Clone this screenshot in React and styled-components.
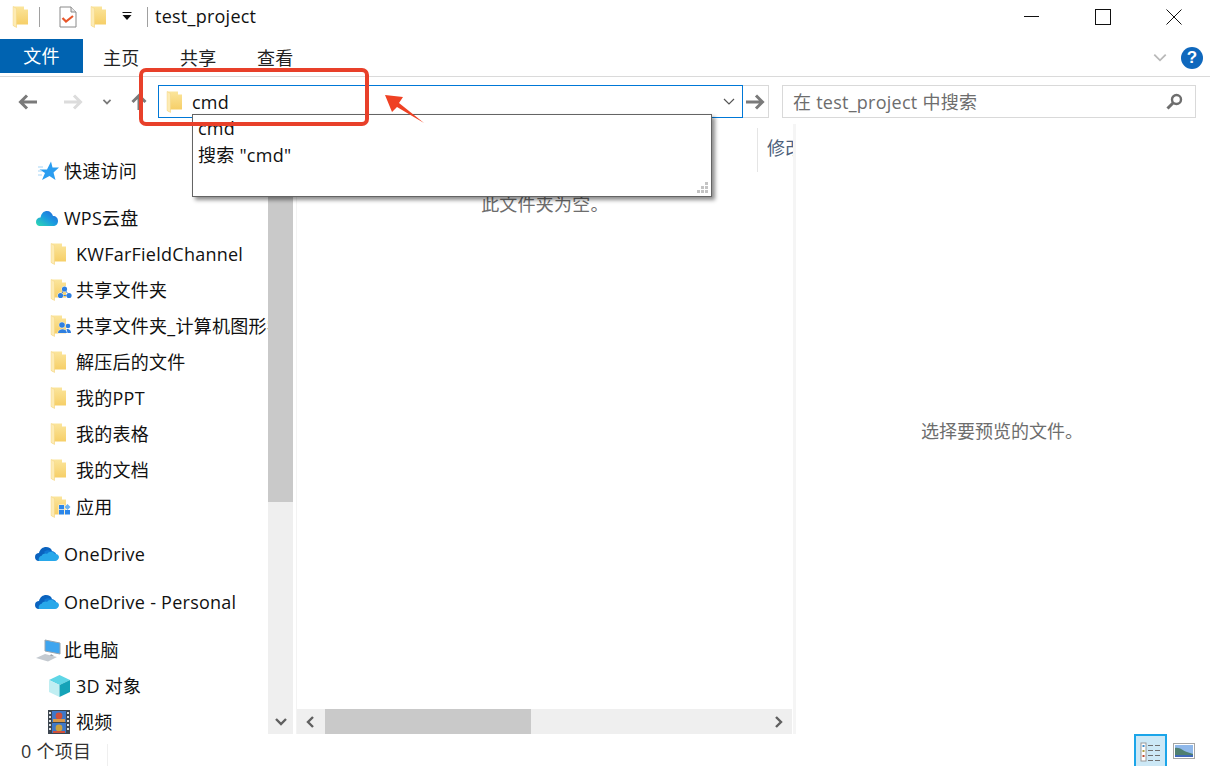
import React from "react";
import styled, { createGlobalStyle } from "styled-components";

const FONT = `"Open Sans", "Noto Sans CJK SC", sans-serif`;

const Global = createGlobalStyle`
  html, body { margin: 0; padding: 0; background: #fff; }
  * { box-sizing: border-box; }
`;

const Window = styled.div`
  position: relative;
  width: 1210px;
  height: 766px;
  overflow: hidden;
  display: flex;
  flex-direction: column;
  background: #fff;
  color: #111;
  font: 18px/24px ${FONT};
  letter-spacing: 0.25px;
`;

/* title bar */
const TitleBar = styled.div`
  height: 39px;
  padding: 0 1px 6px 10px;
  display: flex;
  align-items: center;
`;

const TitleDivider = styled.div`
  width: 1px;
  height: 20px;
  background: #a0a0a0;
  margin: 0 ${(p) => p.$right}px 0 ${(p) => p.$left}px;
`;

const TitleIcon = styled.div`
  display: flex;
  margin-left: ${(p) => p.$ml || 0}px;
`;

const Title = styled.div`
  flex: 1;
  margin-top: -2px;
`;

const WindowButton = styled.div`
  width: 71px;
  height: 33px;
  display: flex;
  align-items: center;
  justify-content: center;
`;

/* ribbon */
const Ribbon = styled.div`
  height: 38px;
  padding-bottom: 3px;
  display: flex;
  align-items: stretch;
  border-bottom: 1px solid #dadada;
`;

const FileTab = styled.div`
  width: 83px;
  background: #0063b1;
  color: #fff;
  display: flex;
  align-items: center;
  justify-content: center;
  margin-right: 20px;
`;

const Tab = styled.div`
  width: 37px;
  margin-right: 40px;
  display: flex;
  align-items: center;
  white-space: nowrap;
  padding-top: 3px;
  color: #222;
`;

const RibbonRight = styled.div`
  margin-left: auto;
  padding-right: 7px;
  display: flex;
  align-items: center;
  gap: 13px;
  padding-top: 3px;
`;

const Help = styled.div`
  width: 22px;
  height: 22px;
  border-radius: 50%;
  background: #0f68bd;
  color: #fff;
  font: bold 17px/22px "Liberation Sans", sans-serif;
  text-align: center;
`;

/* navigation */
const NavBar = styled.div`
  height: 47px;
  padding: 8px 14px 6px 18px;
  display: flex;
  align-items: stretch;
`;

const NavIcon = styled.div`
  display: flex;
  align-items: center;
  justify-content: center;
  width: ${(p) => p.$w}px;
  margin-right: ${(p) => p.$mr || 0}px;
`;

const AddressBox = styled.div`
  width: 585px;
  display: flex;
  align-items: center;
  padding: 0 6px 0 5px;
  border: 1px solid #0078d7;
`;

const AddressText = styled.div`
  flex: 1;
`;

const GoButton = styled.div`
  width: 26px;
  display: flex;
  align-items: center;
  justify-content: center;
  border: 1px solid #d9d9d9;
  border-left: 0;
  margin-right: 13px;
`;

const SearchBox = styled.div`
  flex: 1;
  display: flex;
  align-items: center;
  justify-content: space-between;
  padding: 0 12px 0 10px;
  border: 1px solid #d9d9d9;
  color: #6d6d6d;
`;

/* main area */
const Main = styled.div`
  height: 610px;
  display: flex;
`;

const Sidebar = styled.div`
  width: 268px;
  padding-top: 29px;
  overflow: hidden;
`;

const Row = styled.div`
  height: 36px;
  display: flex;
  align-items: center;
  white-space: nowrap;
  padding-left: ${(p) => (p.$child ? 48 : 35)}px;
  margin-bottom: ${(p) => p.$gap || 0}px;
`;

const RowIcon = styled.div`
  width: 28px;
  flex: none;
  display: flex;
  align-items: center;
  margin-right: ${(p) => (p.$child ? 0 : 1)}px;
`;

const VScroll = styled.div`
  width: 25px;
  background: #efefef;
  display: flex;
  flex-direction: column;
`;

const VThumb = styled.div`
  height: 378px;
  background: #c9c9c9;
`;

const ScrollArrow = styled.div`
  height: 25px;
  width: ${(p) => p.$w || 25}px;
  flex: none;
  display: flex;
  align-items: center;
  justify-content: center;
  margin-top: ${(p) => (p.$end ? "auto" : 0)};
  margin-left: ${(p) => (p.$end ? "auto" : 0)};
`;

const FilePane = styled.div`
  width: 497px;
  margin-left: 3px;
  border-left: 1px solid #f3f3f3;
  display: flex;
  flex-direction: column;
`;

const ColumnHeader = styled.div`
  height: 44px;
  margin-top: 4px;
  display: flex;
  justify-content: flex-end;
`;

const ColumnTitle = styled.div`
  width: 36px;
  overflow: hidden;
  white-space: nowrap;
  padding: 8px 0 0 9px;
  border-left: 1px solid #e5e5e5;
  color: #4c607a;
`;

const EmptyText = styled.div`
  flex: 1;
  padding: 20px 0 0 0;
  text-align: center;
  color: #6d6d6d;
`;

const HScroll = styled.div`
  height: 25px;
  margin-right: 1px;
  display: flex;
  background: #efefef;
`;

const HThumb = styled.div`
  width: 206px;
  background: #c9c9c9;
`;

const Preview = styled.div`
  flex: 1;
  border-left: 3px solid #f5f5f5;
  padding: 4px 2px 0 0;
  display: flex;
  align-items: center;
  justify-content: center;
  color: #6d6d6d;
  letter-spacing: 0;
`;

/* status bar */
const StatusBar = styled.div`
  flex: 1;
  display: flex;
  align-items: center;
  padding: 2px 0 0 21px;
  color: #333;
`;

const StatusDivider = styled.div`
  width: 1px;
  height: 22px;
  margin: 7px 0 0 16px;
  background: #efefef;
`;

const ViewDetails = styled.div`
  margin: -2px 0 0 auto;
  align-self: stretch;
  width: 33px;
  background: #cce8f6;
  border: 2px solid #1ba5e9;
  border-bottom: 0;
  display: flex;
  align-items: center;
  justify-content: center;
`;

const ViewLarge = styled.div`
  margin: 0 15px 0 6px;
  display: flex;
`;

/* overlays */
const Suggest = styled.div`
  position: absolute;
  left: 192px;
  top: 114px;
  width: 520px;
  height: 83px;
  padding: 0 5px;
  background: #fff;
  border: 1px solid #646464;
  box-shadow: 3px 3px 4px rgba(0, 0, 0, 0.45);
  line-height: 27px;
`;

const Grip = styled.svg`
  position: absolute;
  right: 2px;
  bottom: 2px;
`;

const Callout = styled.div`
  position: absolute;
  left: 139px;
  top: 68px;
  width: 230px;
  height: 58px;
  border: 4px solid #e8402a;
  border-radius: 7px;
`;

const CalloutArrow = styled.svg`
  position: absolute;
  left: 380px;
  top: 90px;
`;

const Folder = ({ badge }) => (
  <svg width="28" height="22" viewBox="0 0 28 22">
    <defs>
      <linearGradient id="folderFill" x1="0" y1="0" x2="0" y2="1">
        <stop offset="0" stopColor="#fbe59c" />
        <stop offset="1" stopColor="#f5cb5f" />
      </linearGradient>
    </defs>
    <path d="M3 0.5 H14 V3.5 H18 V18.5 H6.5 V21.5 L3 19.5 Z" fill="url(#folderFill)" />
    <path d="M3 0.5 L6.5 2.5 V21.5 L3 19.5 Z" fill="#fdebb4" stroke="#f2d27c" strokeWidth="0.4" />
    {badge === "share" && (
      <g fill="#2f7fe0" stroke="#fff" strokeWidth="1" paintOrder="stroke">
        <path d="M16.5 10 L12.5 16.5 H21 Z" fill="none" stroke="#2f7fe0" />
        <circle cx="16.5" cy="10" r="2.6" />
        <circle cx="12.5" cy="16.5" r="2.6" />
        <circle cx="21" cy="16.5" r="2.6" />
      </g>
    )}
    {badge === "user" && (
      <g fill="#2f7fe0" stroke="#fff" strokeWidth="0.8" paintOrder="stroke">
        <circle cx="14" cy="10" r="2.8" />
        <circle cx="20" cy="11" r="2.3" />
        <path d="M10 18 C10 13 19 13 19 18 Z" />
        <path d="M18.5 14 C22 14 23 16 23 18 H19.5 Z" />
      </g>
    )}
    {badge === "apps" && (
      <g stroke="#fff" strokeWidth="0.8" paintOrder="stroke">
        <rect x="11" y="9" width="5" height="4.5" fill="#2b86ea" />
        <rect x="11" y="14" width="5" height="4.5" fill="#2b86ea" />
        <rect x="17" y="14" width="5" height="4.5" fill="#2b86ea" />
        <path d="M19.5 8 L22.5 11 L19.5 14 L16.5 11 Z" fill="#6bb2f2" />
      </g>
    )}
  </svg>
);

const Star = () => (
  <svg width="24" height="20" viewBox="-3 0 24 20">
    <path d="M13 0.5 L14.5 6.5 H21 L15.5 11.5 L17.5 19 L11.5 15 L4 19 L7 12 L1.5 8.5 H9 Z" fill="#2a9df0" />
    <path d="M0 6 H5 M0 10 H4 M0 14 H4" stroke="#a5d4f5" strokeWidth="1" />
  </svg>
);

const WpsCloud = () => (
  <svg width="24" height="17" viewBox="0 0 24 17">
    <defs>
      <linearGradient id="wpsFill" x1="0" y1="1" x2="1" y2="0">
        <stop offset="0" stopColor="#2fdcb0" />
        <stop offset="0.5" stopColor="#1a9be0" />
        <stop offset="1" stopColor="#2560d8" />
      </linearGradient>
    </defs>
    <path d="M5 16 C2 16 1 13.5 1 12 C1 9 3 7.5 5.5 7.5 C6.5 3 9 1 12 1 C15 1 17 3 18 6 C21 6 23 8 23 11 C23 14 21 16 18 16 Z" fill="url(#wpsFill)" />
  </svg>
);

const OneDrive = () => (
  <svg width="24" height="16" viewBox="0 0 24 16">
    <path d="M4 15 C1 15 0 13 0 11 C0 8 2 7 4 7 C5 3 8 1 11 1 C14 1 16 2 17 5 L12 9 Z" fill="#0a63bf" />
    <path d="M9 6 C11 4 14 4 16 5 C19 5 21 7 21 8 L14 11 Z" fill="#0f78d4" />
    <path d="M4 15 H20 C22 15 24 13 24 11 C24 9 22 7.5 20 8 C18 5 14 5 12 8 C10 7 7 8 6.5 10 C5 10 3 12 4 15 Z" fill="#28a8ea" />
  </svg>
);

const Computer = () => (
  <svg width="26" height="23" viewBox="0 0 26 23">
    <path d="M10 1 L25 4 V15 L10 12 Z" fill="#3ea5ef" stroke="#9aa6b0" strokeWidth="1" />
    <path d="M1 19 L10 15 L22 18 L13 22.5 Z" fill="#c4cad0" />
    <path d="M16 15 L19 17 H15 Z" fill="#a0a8b0" />
  </svg>
);

const Cube = () => (
  <svg width="23" height="22" viewBox="0 0 23 22">
    <path d="M11.5 0 L22 5 L11.5 10 L1 5 Z" fill="#5fd6e6" />
    <path d="M1 5 L11.5 10 V22 L1 17 Z" fill="#c0eef2" />
    <path d="M11.5 10 L22 5 V17 L11.5 22 Z" fill="#15a3b8" />
  </svg>
);

const Film = () => (
  <svg width="22" height="24" viewBox="0 0 22 24">
    <rect width="22" height="24" fill="#3d4650" />
    <rect x="4" y="1" width="14" height="11" fill="#3f78c8" />
    <rect x="4" y="13" width="14" height="10" fill="#3f78c8" />
    <circle cx="11" cy="6" r="3.4" fill="#d0503a" />
    <rect x="5" y="9" width="12" height="3" fill="#d99a4a" />
    <circle cx="11" cy="18" r="3.4" fill="#c9a13f" />
    <rect x="5" y="21" width="12" height="2" fill="#d0503a" />
    <path d="M2 2 V22 M20 2 V22" stroke="#dfe3e6" strokeWidth="2" strokeDasharray="2 2" />
  </svg>
);

const Chevron = ({ dir = "down", color = "#606060", size = 14, width = 2.4 }) => {
  const points = {
    down: "2,4 7,9 12,4",
    left: "9,2 4,7 9,12",
    right: "5,2 10,7 5,12",
  }[dir];
  return (
    <svg width={size} height={size} viewBox="0 0 14 14">
      <polyline points={points} fill="none" stroke={color} strokeWidth={width} />
    </svg>
  );
};

const Arrow = ({ dir, color }) => {
  const paths = {
    left: "M19 9 H3 M9 2.5 L2.5 9 L9 15.5",
    right: "M0 9 H16 M10 2.5 L16.5 9 L10 15.5",
    up: "M9 17 V3 M2.5 9 L9 2.5 L15.5 9",
  };
  return (
    <svg width="19" height="18" viewBox="0 0 19 18">
      <path d={paths[dir]} fill="none" stroke={color} strokeWidth="3" />
    </svg>
  );
};

const Search = () => (
  <svg width="17" height="17" viewBox="0 0 17 17">
    <circle cx="10.5" cy="6.5" r="4.5" fill="none" stroke="#6e6e6e" strokeWidth="2.4" />
    <path d="M7 10 L1.5 15.5" stroke="#6e6e6e" strokeWidth="3" />
  </svg>
);

const rows = [
  { label: "快速访问", icon: <Star />, gap: 11 },
  { label: "WPS云盘", icon: <WpsCloud /> },
  { label: "KWFarFieldChannel", child: true, icon: <Folder /> },
  { label: "共享文件夹", child: true, icon: <Folder badge="share" /> },
  { label: "共享文件夹_计算机图形学", child: true, icon: <Folder badge="user" /> },
  { label: "解压后的文件", child: true, icon: <Folder /> },
  { label: "我的PPT", child: true, icon: <Folder /> },
  { label: "我的表格", child: true, icon: <Folder /> },
  { label: "我的文档", child: true, icon: <Folder />, gap: 1 },
  { label: "应用", child: true, icon: <Folder badge="apps" />, gap: 11 },
  { label: "OneDrive", icon: <OneDrive />, gap: 12 },
  { label: "OneDrive - Personal", icon: <OneDrive />, gap: 12 },
  { label: "此电脑", icon: <Computer /> },
  { label: "3D 对象", child: true, icon: <Cube /> },
  { label: "视频", child: true, icon: <Film /> },
];

export default function App() {
  return (
    <Window>
      <Global />
      <TitleBar>
        <Folder />
        <TitleDivider $left={1} $right={19} />
        <svg width="18" height="22" viewBox="0 0 18 22">
          <path d="M1 1 H12 L17 6 V21 H1 Z" fill="#fff" stroke="#8a8a8a" />
          <path d="M12 1 V6 H17" fill="#e6e6e6" stroke="#8a8a8a" />
          <polyline points="3.5,12 7,15.5 14,10" fill="none" stroke="#e8562a" strokeWidth="2.2" />
        </svg>
        <TitleIcon $ml={11}><Folder /></TitleIcon>
        <TitleIcon $ml={6}>
          <svg width="10" height="9" viewBox="0 0 10 9">
            <path d="M0.5 0 H9.5 V1 H0.5 Z M0.5 3 H9.5 L5 8 Z" fill="#111" />
          </svg>
        </TitleIcon>
        <TitleDivider $left={15} $right={7} />
        <Title>test_project</Title>
        <WindowButton>
          <svg width="15" height="2"><rect width="15" height="1" y="0" fill="#111" /></svg>
        </WindowButton>
        <WindowButton>
          <svg width="16" height="16"><rect x="0.5" y="0.5" width="15" height="15" fill="none" stroke="#111" /></svg>
        </WindowButton>
        <WindowButton>
          <svg width="16" height="16"><path d="M0.5 0.5 L15.5 15.5 M15.5 0.5 L0.5 15.5" stroke="#111" /></svg>
        </WindowButton>
      </TitleBar>

      <Ribbon>
        <FileTab>文件</FileTab>
        <Tab>主页</Tab>
        <Tab>共享</Tab>
        <Tab>查看</Tab>
        <RibbonRight>
          <Chevron color="#b9b9b9" size={16} width={1.6} />
          <Help>?</Help>
        </RibbonRight>
      </Ribbon>

      <NavBar>
        <NavIcon $w={19} $mr={27}><Arrow dir="left" color="#7a7a7a" /></NavIcon>
        <NavIcon $w={19} $mr={19}><Arrow dir="right" color="#dcdcdc" /></NavIcon>
        <NavIcon $w={10} $mr={18}><Chevron color="#7a7a7a" size={10} width={2.4} /></NavIcon>
        <NavIcon $w={19} $mr={9}><Arrow dir="up" color="#7a7a7a" /></NavIcon>
        <AddressBox>
          <Folder />
          <AddressText>cmd</AddressText>
          <Chevron color="#555" size={14} width={1.2} />
        </AddressBox>
        <GoButton><Arrow dir="right" color="#7a7a7a" /></GoButton>
        <SearchBox>
          在 test_project 中搜索
          <Search />
        </SearchBox>
      </NavBar>

      <Main>
        <Sidebar>
          {rows.map((row) => (
            <Row key={row.label} $child={row.child} $gap={row.gap}>
              <RowIcon $child={row.child}>{row.icon}</RowIcon>
              {row.label}
            </Row>
          ))}
        </Sidebar>
        <VScroll>
          <VThumb />
          <ScrollArrow $end><Chevron /></ScrollArrow>
        </VScroll>
        <FilePane>
          <ColumnHeader>
            <ColumnTitle>修改日期</ColumnTitle>
          </ColumnHeader>
          <EmptyText>此文件夹为空。</EmptyText>
          <HScroll>
            <ScrollArrow $w={28}><Chevron dir="left" /></ScrollArrow>
            <HThumb />
            <ScrollArrow $end $w={28}><Chevron dir="right" /></ScrollArrow>
          </HScroll>
        </FilePane>
        <Preview>选择要预览的文件。</Preview>
      </Main>

      <StatusBar>
        0 个项目
        <StatusDivider />
        <ViewDetails>
          <svg width="21" height="21" viewBox="0 0 21 21">
            <rect x="1" y="2" width="5" height="18" fill="#fff" stroke="#9a9a9a" />
            <rect x="2.5" y="4" width="2" height="2" fill="#3d8ed0" />
            <rect x="2.5" y="9" width="2" height="2" fill="#b0a040" />
            <rect x="2.5" y="14" width="2" height="2" fill="#c04a30" />
            <path d="M8 4.5 H13 M15 4.5 H20 M8 9.5 H13 M15 9.5 H20 M8 14.5 H13 M15 14.5 H20 M8 19.5 H13 M15 19.5 H20" stroke="#707070" />
          </svg>
        </ViewDetails>
        <ViewLarge>
          <svg width="22" height="16" viewBox="0 0 22 16">
            <rect x="0.5" y="0.5" width="21" height="15" fill="#fff" stroke="#a5a5a5" />
            <rect x="2" y="2" width="18" height="12" fill="#8fb8ea" />
            <path d="M2 5 C7 4 10 8 14 9 L20 11 V14 H2 Z" fill="#4f7f70" />
            <path d="M2 12 H20 V14 H2 Z" fill="#3f68b8" />
          </svg>
        </ViewLarge>
      </StatusBar>

      <Suggest>
        <div>cmd</div>
        <div>搜索 "cmd"</div>
        <Grip width="12" height="12" viewBox="0 0 12 12">
          <path d="M8 0 H11 V3 H8 Z M4 4 H7 V7 H4 Z M8 4 H11 V7 H8 Z M0 8 H3 V11 H0 Z M4 8 H7 V11 H4 Z M8 8 H11 V11 H8 Z" fill="#c4c4c4" />
        </Grip>
      </Suggest>
      <Callout />
      <CalloutArrow width="50" height="40" viewBox="0 0 50 40">
        <polygon points="5,5 23,7 19,13 44,33 17,17 12,22" fill="#ef4123" />
      </CalloutArrow>
    </Window>
  );
}
